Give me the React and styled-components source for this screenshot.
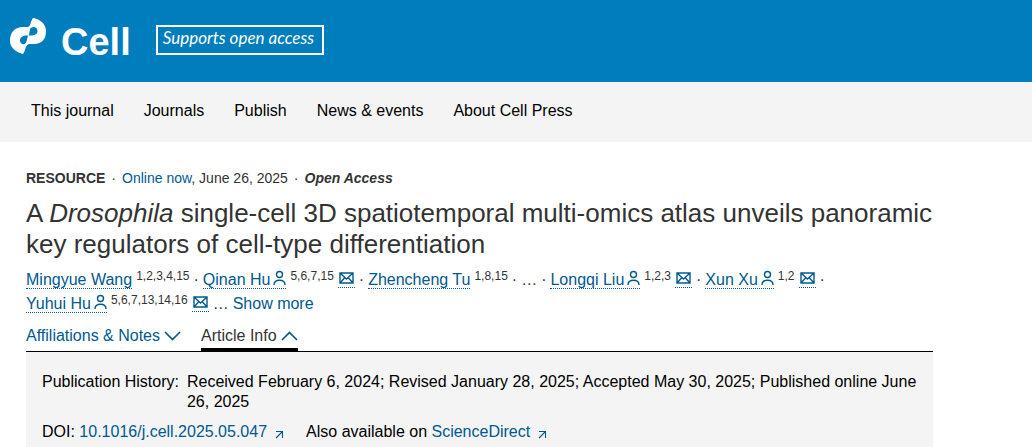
import React from 'react';
import styled, { createGlobalStyle } from 'styled-components';

const GlobalStyle = createGlobalStyle`
	* {
		box-sizing: border-box;
	}
	body {
		margin: 0;
		background: #ffffff;
		color: #333333;
		font-family: "Liberation Sans", Arial, sans-serif;
		font-size: 16px;
		line-height: 24px;
	}
`;

const Header = styled.header`
	display: flex;
	align-items: flex-start;
	gap: 25px;
	padding: 18px 10px 22px;
	background: #007dbc;
	color: #ffffff;
`;
const HomeLink = styled.a`
	display: flex;
	align-items: flex-start;
	gap: 14px;
	color: inherit;
	text-decoration: none;
`;
const Wordmark = styled.span`
	padding-top: 6px;
	font-size: 38px;
	font-weight: bold;
	line-height: 36px;
`;
const Supports = styled.a`
	margin-top: 7px;
	padding: 0 8px 4px 5px;
	border: 2px solid #ffffff;
	color: #ffffff;
	font-family: Lato, sans-serif;
	font-size: 17px;
	font-style: italic;
	line-height: 22px;
	text-decoration: none;
`;

const Nav = styled.nav`
	display: flex;
	flex-wrap: wrap;
	gap: 30px;
	padding: 17px 31px 19px;
	background: #f4f4f4;
`;
const NavLink = styled.a`
	color: #000000;
	text-decoration: none;
`;

const Article = styled.main`
	max-width: 959px;
	padding: 26px 26px 0;
`;
const Meta = styled.div`
	display: flex;
	gap: 6px;
	font-size: 14px;
	line-height: 20px;
`;
const Access = styled.strong`
	font-style: italic;
`;
const Link = styled.a`
	color: #00598f;
	text-decoration: none;
`;
const Title = styled.h1`
	margin: 10px 0 8px;
	font-size: 26px;
	font-weight: normal;
	line-height: 31px;
`;

const Authors = styled.ul`
	display: flex;
	flex-wrap: wrap;
	column-gap: 4px;
	margin: 0;
	padding: 0;
	list-style: none;
`;
const Author = styled.li`
	display: flex;
	gap: 4px;
`;
const Dotted = styled(Link)`
	display: flex;
	align-items: center;
	gap: 3px;
	align-self: flex-start;
	height: 21px;
	border-bottom: 1px dotted #00598f;
`;
const MailLink = styled(Dotted)`
	height: 20px;
	padding: 0 1px;
`;
const Name = styled.span`
	align-self: flex-start;
`;
const Refs = styled.span`
	font-size: 12px;
	line-height: 16px;
`;
const TextButton = styled.button`
	padding: 0;
	border: 0;
	background: none;
	color: #00598f;
	font: inherit;
	cursor: pointer;
`;

const Tabs = styled.div`
	display: flex;
	gap: 20px;
	margin-top: 8px;
	border-bottom: 1px solid #000000;
`;
const Tab = styled(TextButton)`
	display: flex;
	align-items: center;
	gap: 4px;
	border-bottom: 3px solid ${(props) => (props.$active ? '#000000' : 'transparent')};
	color: ${(props) => (props.$active ? '#333333' : '#00598f')};
`;

const Info = styled.section`
	padding: 20px 16px;
	background: #f4f4f4;
	color: #000000;
	line-height: 20px;
`;
const History = styled.dl`
	display: flex;
	gap: 8px;
	margin: 0 0 10px;
`;
const Term = styled.dt`
	flex: none;
`;
const Dates = styled.dd`
	margin: 0;
`;
const Sources = styled.div`
	display: flex;
	flex-wrap: wrap;
	gap: 22px;
`;
const External = styled(Link)`
	display: inline-flex;
	align-items: center;
	gap: 8px;
`;

const Logo = () => (
	<svg width="37" height="37" viewBox="0 0 37 37" aria-hidden="true">
		<path
			fill="#ffffff"
			fillRule="evenodd"
			d="M23 0C30 1 36 6 36 13C36 21 32 26 24 26L19 26C15 27 16 32 13 36C5 34 0 29 0 23C0 14 5 9 13 9L18 9C21 8 20 4 23 0ZM19.5 12C20.5 8 27.5 8 27.5 13C27.5 17 23 18 18.5 17.5ZM18.5 17.5L17 23C16 27.5 10 27 10 22.5C10 18.5 14 17 18.5 17.5Z"
		/>
		<path d="M19.5 9.5L18.5 17.5L16.5 25.5" fill="none" stroke="#ffffff" />
	</svg>
);

const PersonIcon = () => (
	<svg width="13" height="16" viewBox="0 0 13 16" fill="none" stroke="currentColor" strokeWidth="1.4" aria-hidden="true">
		<circle cx="6.5" cy="4.5" r="3" />
		<path d="M1 15Q1 10.2 6.5 10.2T12 15" />
	</svg>
);

const MailIcon = () => (
	<svg width="15" height="12" viewBox="0 0 15 12" fill="none" stroke="currentColor" strokeWidth="1.4" aria-hidden="true">
		<path d="M1 1H14V11H1ZM1 1L7.5 7L14 1M1 11L5.5 6M14 11L9.5 6" />
	</svg>
);

const Chevron = ({ up }) => (
	<svg width="17" height="10" viewBox="0 0 17 10" fill="none" stroke="#00598f" strokeWidth="1.6" aria-hidden="true">
		<path d={up ? 'M1 9L8.5 1.5L16 9' : 'M1 1L8.5 8.5L16 1'} />
	</svg>
);

const ArrowIcon = () => (
	<svg width="9" height="14" viewBox="0 0 9 14" fill="none" stroke="currentColor" strokeWidth="1.1" aria-hidden="true">
		<path d="M1 6.5H7.5V13M7.5 6.5L1 13" />
	</svg>
);

const navItems = ['This journal', 'Journals', 'Publish', 'News & events', 'About Cell Press'];

const authors = [
	{ name: 'Mingyue Wang', refs: '1,2,3,4,15', after: '·' },
	{ name: 'Qinan Hu', refs: '5,6,7,15', person: true, mail: true, after: '·' },
	{ name: 'Zhencheng Tu', refs: '1,8,15', after: '·' },
	{ gap: true },
	{ name: 'Longqi Liu', refs: '1,2,3', person: true, mail: true, after: '·' },
	{ name: 'Xun Xu', refs: '1,2', person: true, mail: true, after: '·' },
	{ name: 'Yuhui Hu', refs: '5,6,7,13,14,16', person: true, mail: true, after: '…' },
];

const AuthorItem = ({ author }) => (
	author.gap ?
		<Author>
			<span>…</span>
			<span>·</span>
		</Author>
	:
		<Author>
			<Dotted href="#author">
				<Name>{author.name}</Name>
				{author.person && <PersonIcon />}
			</Dotted>
			<Refs>{author.refs}</Refs>
			{author.mail && <MailLink href="#mail" aria-label={`Email ${author.name}`}><MailIcon /></MailLink>}
			<span>{author.after}</span>
		</Author>
);

const App = () => (
	<>
		<GlobalStyle />
		<Header>
			<HomeLink href="#home">
				<Logo />
				<Wordmark>Cell</Wordmark>
			</HomeLink>
			<Supports href="#open-access">Supports open access</Supports>
		</Header>
		<Nav>
			{navItems.map((item) => <NavLink key={item} href="#nav">{item}</NavLink>)}
		</Nav>
		<Article>
			<Meta>
				<strong>RESOURCE</strong>
				<span>·</span>
				<span><Link href="#online">Online now</Link>, June 26, 2025</span>
				<span>·</span>
				<Access>Open Access</Access>
			</Meta>
			<Title>
				A <i>Drosophila</i> single-cell 3D spatiotemporal multi-omics atlas unveils panoramic key regulators of cell-type differentiation
			</Title>
			<Authors>
				{authors.map((author, i) => <AuthorItem key={i} author={author} />)}
				<li><TextButton type="button">Show more</TextButton></li>
			</Authors>
			<Tabs>
				<Tab type="button" aria-expanded="false">Affiliations &amp; Notes <Chevron /></Tab>
				<Tab type="button" aria-expanded="true" $active>Article Info <Chevron up /></Tab>
			</Tabs>
			<Info>
				<History>
					<Term>Publication History:</Term>
					<Dates>Received February 6, 2024; Revised January 28, 2025; Accepted May 30, 2025; Published online June 26, 2025</Dates>
				</History>
				<Sources>
					<span>DOI: <External href="#doi">10.1016/j.cell.2025.05.047 <ArrowIcon /></External></span>
					<span>Also available on <External href="#sciencedirect">ScienceDirect <ArrowIcon /></External></span>
				</Sources>
			</Info>
		</Article>
	</>
);

export default App;
